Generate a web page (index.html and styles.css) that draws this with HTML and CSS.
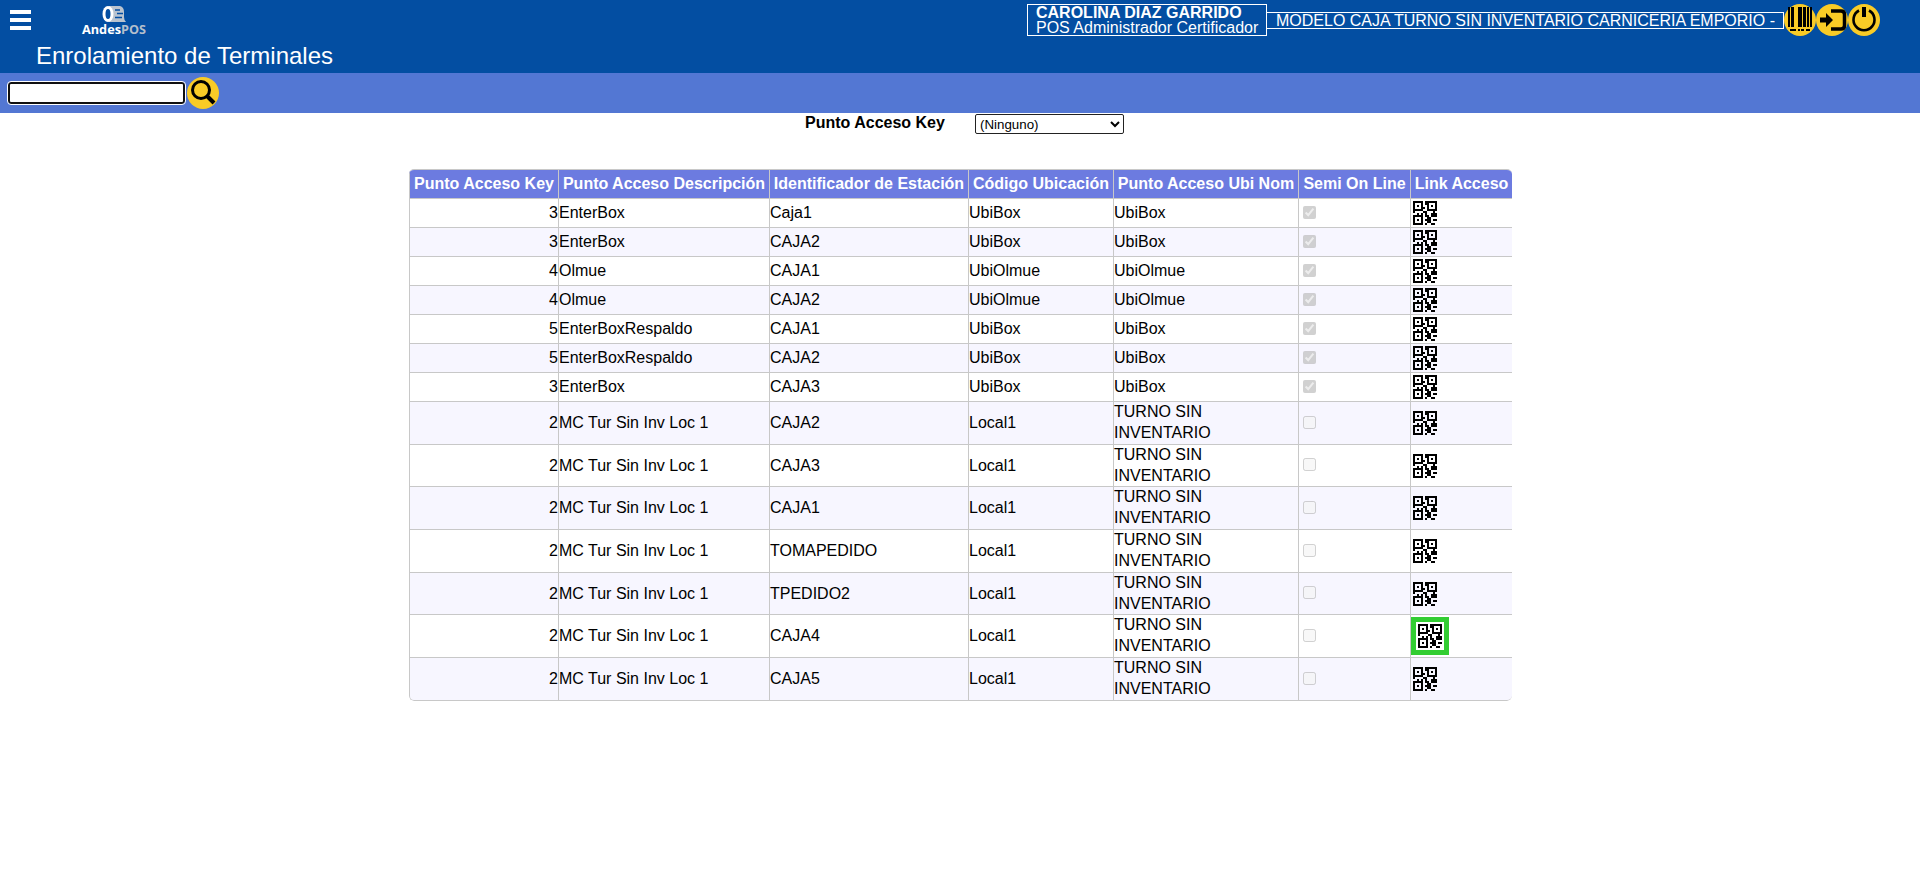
FILE: index.html
```html
<!DOCTYPE html>
<html lang="es">
<head>
<meta charset="utf-8">
<title>Enrolamiento de Terminales</title>
<link rel="stylesheet" href="styles.css">
</head>
<body>
<svg width="0" height="0" class="defs" aria-hidden="true">
  <symbol id="qr" viewBox="0 0 12 12">
    <path fill="none" stroke="#000" stroke-width="1" shape-rendering="crispEdges" d="M0 .5h5M6 .5h6M0 1.500h1M4 1.500h1M6 1.500h2M11 1.500h1M0 2.500h1M2 2.500h1M4 2.500h1M7 2.500h1M9 2.500h1M11 2.500h1M0 3.500h1M4 3.500h2M7 3.500h1M11 3.500h1M0 4.500h5M7 4.500h5M0 5.500h1M5 5.500h2M10 5.500h1M2 6.500h1M4 6.500h1M6 6.500h1M9 6.500h3M0 7.500h5M6 7.500h2M9 7.500h3M0 8.500h1M4 8.500h1M7 8.500h2M0 9.500h1M2 9.500h1M4 9.500h1M6 9.500h3M10 9.500h2M0 10.500h1M4 10.500h1M7 10.500h2M0 11.500h5M6 11.500h1M9 11.500h2"/>
  </symbol>
</svg>
<header class="top">
  <div class="brand">
    <div class="menu"><i></i><i></i><i></i></div>
    <svg class="logo" width="70" height="36" viewBox="0 0 70 36">
      <path fill="#b9c3cf" d="M28 2h11q4 1 4 6v5q0 3 2 5H28z"/>
      <ellipse cx="27" cy="10" rx="5.500" ry="8" fill="#fff"/>
      <ellipse cx="27" cy="10" rx="2.500" ry="5" fill="#034ea2"/>
      <path stroke="#034ea2" stroke-width="1.300" d="M34 6h5M36 9.500h6M34 13.500h7"/>
      <text class="andes" x="1" y="30" textLength="39" lengthAdjust="spacingAndGlyphs">Andes</text>
      <text class="pos" x="40" y="30" textLength="25" lengthAdjust="spacingAndGlyphs">POS</text>
    </svg>
    <h1>Enrolamiento de Terminales</h1>
  </div>
  <div class="session">
    <div class="user"><b>CAROLINA DIAZ GARRIDO</b><span>POS Administrador Certificador</span></div>
    <div class="company"><span>MODELO CAJA TURNO SIN INVENTARIO CARNICERIA EMPORIO -</span></div>
    <svg class="round" viewBox="0 0 32 32"><circle cx="16" cy="16" r="16" fill="#f9cb26"/><path shape-rendering="crispEdges" d="M4 3h2v20H4zM7 3h3v20H7zM14 3h4v20h-4zM19 3h3v20h-3zM23 3h2v20h-2zM26 3h2v20h-2zM6 25h6v2H6zM14 25h2v2h-2zM17 25h3v2h-3zM22 25h4v2h-4z"/></svg>
    <svg class="round" viewBox="0 0 32 32"><circle cx="16" cy="16" r="16" fill="#f9cb26"/><path d="M4 13.500h6V9l7 7-7 7V18.500H4z"/><path d="M15 7h10q3.500 0 3.500 3.500v11q0 3.500-3.500 3.500H15" fill="none" stroke="#000" stroke-width="3.500"/></svg>
    <svg class="round" viewBox="0 0 32 32"><circle cx="16" cy="16" r="16" fill="#f9cb26"/><path d="M11 6.500A10.500 10.500 0 1 0 21 6.500" fill="none" stroke="#000" stroke-width="2.600"/><path d="M14 3h4v10h-4z"/></svg>
  </div>
</header>
<div class="searchbar">
  <input type="text" class="search" aria-label="Buscar">
  <svg class="round" viewBox="0 0 32 32"><circle cx="16" cy="16" r="16" fill="#f9cb26"/><circle cx="14" cy="13" r="8.500" fill="none" stroke="#000" stroke-width="3"/><path d="M20 19l7 7" stroke="#000" stroke-width="4"/></svg>
</div>
<div class="filter">
  <label for="pk"><span>Punto Acceso Key</span></label>
  <select id="pk"><option>(Ninguno)</option></select>
</div>
<table class="grid">
  <colgroup><col class="c1"><col class="c2"><col class="c3"><col class="c4"><col class="c5"><col class="c6"><col class="c7"></colgroup>
  <thead><tr><th>Punto Acceso Key</th><th>Punto Acceso Descripción</th><th>Identificador de Estación</th><th>Código Ubicación</th><th>Punto Acceso Ubi Nom</th><th>Semi On Line</th><th>Link Acceso</th></tr></thead>
  <tbody>
    <tr><td>3</td><td>EnterBox</td><td>Caja1</td><td>UbiBox</td><td>UbiBox</td><td><input type="checkbox" checked disabled></td><td><svg class="qr"><use href="#qr"/></svg></td></tr>
    <tr><td>3</td><td>EnterBox</td><td>CAJA2</td><td>UbiBox</td><td>UbiBox</td><td><input type="checkbox" checked disabled></td><td><svg class="qr"><use href="#qr"/></svg></td></tr>
    <tr><td>4</td><td>Olmue</td><td>CAJA1</td><td>UbiOlmue</td><td>UbiOlmue</td><td><input type="checkbox" checked disabled></td><td><svg class="qr"><use href="#qr"/></svg></td></tr>
    <tr><td>4</td><td>Olmue</td><td>CAJA2</td><td>UbiOlmue</td><td>UbiOlmue</td><td><input type="checkbox" checked disabled></td><td><svg class="qr"><use href="#qr"/></svg></td></tr>
    <tr><td>5</td><td>EnterBoxRespaldo</td><td>CAJA1</td><td>UbiBox</td><td>UbiBox</td><td><input type="checkbox" checked disabled></td><td><svg class="qr"><use href="#qr"/></svg></td></tr>
    <tr><td>5</td><td>EnterBoxRespaldo</td><td>CAJA2</td><td>UbiBox</td><td>UbiBox</td><td><input type="checkbox" checked disabled></td><td><svg class="qr"><use href="#qr"/></svg></td></tr>
    <tr><td>3</td><td>EnterBox</td><td>CAJA3</td><td>UbiBox</td><td>UbiBox</td><td><input type="checkbox" checked disabled></td><td><svg class="qr"><use href="#qr"/></svg></td></tr>
    <tr class="tall"><td>2</td><td>MC Tur Sin Inv Loc 1</td><td>CAJA2</td><td>Local1</td><td>TURNO SIN<br>INVENTARIO</td><td><input type="checkbox" disabled></td><td><svg class="qr"><use href="#qr"/></svg></td></tr>
    <tr class="tall short"><td>2</td><td>MC Tur Sin Inv Loc 1</td><td>CAJA3</td><td>Local1</td><td>TURNO SIN<br>INVENTARIO</td><td><input type="checkbox" disabled></td><td><svg class="qr"><use href="#qr"/></svg></td></tr>
    <tr class="tall"><td>2</td><td>MC Tur Sin Inv Loc 1</td><td>CAJA1</td><td>Local1</td><td>TURNO SIN<br>INVENTARIO</td><td><input type="checkbox" disabled></td><td><svg class="qr"><use href="#qr"/></svg></td></tr>
    <tr class="tall"><td>2</td><td>MC Tur Sin Inv Loc 1</td><td>TOMAPEDIDO</td><td>Local1</td><td>TURNO SIN<br>INVENTARIO</td><td><input type="checkbox" disabled></td><td><svg class="qr"><use href="#qr"/></svg></td></tr>
    <tr class="tall short"><td>2</td><td>MC Tur Sin Inv Loc 1</td><td>TPEDIDO2</td><td>Local1</td><td>TURNO SIN<br>INVENTARIO</td><td><input type="checkbox" disabled></td><td><svg class="qr"><use href="#qr"/></svg></td></tr>
    <tr class="tall"><td>2</td><td>MC Tur Sin Inv Loc 1</td><td>CAJA4</td><td>Local1</td><td>TURNO SIN<br>INVENTARIO</td><td><input type="checkbox" disabled></td><td><svg class="qr marked"><use href="#qr"/></svg></td></tr>
    <tr class="tall"><td>2</td><td>MC Tur Sin Inv Loc 1</td><td>CAJA5</td><td>Local1</td><td>TURNO SIN<br>INVENTARIO</td><td><input type="checkbox" disabled></td><td><svg class="qr"><use href="#qr"/></svg></td></tr>
  </tbody>
</table>
</body>
</html>
```
FILE: styles.css
```css
* { box-sizing: border-box; }
body { margin: 0; background: #fff; color: #000; font: 16px/20.8px "Liberation Sans", Arial, sans-serif; }
.defs { display: none; }
.top { height: 73px; background: #034ea2; color: #fff; display: flex; justify-content: space-between; padding-right: 40px; }
.brand { display: grid; grid-template-columns: 81px 300px; grid-template-rows: 36px 37px; }
.menu { display: flex; flex-direction: column; gap: 4px; padding: 10px 0 0 10px; }
.menu i { width: 21px; height: 4px; background: #fff; }
.logo { display: block; margin-top: 4px; overflow: visible; }
.logo text { font: bold 13px/16px "Open Sans", sans-serif; }
.andes { fill: #fff; }
.pos { fill: #b4bfcc; }
.brand h1 { grid-column: 1 / 3; margin: 0; padding-left: 36px; font-size: 24px; font-weight: normal; line-height: 40px; white-space: nowrap; }
.session { display: flex; align-items: flex-start; padding-top: 4px; }
.user { width: 240px; height: 32px; border: 1px solid #fff; padding: 0 8px; font-size: 16px; line-height: 15px; white-space: nowrap; }
.user b, .user span { display: block; }
.company { width: 518px; height: 17px; margin: 8px 0 0 -1px; border: 1px solid #fff; padding-left: 9px; line-height: 15px; white-space: nowrap; }
.round { display: block; width: 32px; height: 32px; flex: none; }
.searchbar { height: 40px; background: #5377d3; display: flex; align-items: flex-start; gap: 2px; padding: 4px 0 0 8px; }
.search { width: 177px; height: 22px; margin-top: 5px; padding: 0; background: #fff; border: 2px solid #101010; border-radius: 3px; outline: 1px solid #fff; }
.filter { height: 56px; display: flex; align-items: flex-start; padding-left: 805px; }
.filter label { width: 170px; font-weight: bold; line-height: 20px; }
.filter select { width: 149px; height: 20px; margin-top: 1px; padding: 0; border: 1.500px solid #222; border-radius: 2px; background: #fff; color: #000; font: 13.333px "Liberation Sans", Arial, sans-serif; }
.grid { width: 1103px; margin-left: 409px; table-layout: fixed; border-collapse: separate; border-spacing: 0; border: 0 solid #c8c8c8; border-width: 1px 0 0; border-radius: 5px; overflow: hidden; }
.c1 { width: 149px; }
.c2 { width: 211px; }
.c3 { width: 199px; }
.c4 { width: 145px; }
.c5 { width: 185px; }
.c6 { width: 112px; }
.c7 { width: 102px; }
.grid th, .grid td { height: 29px; border: 0 solid #c8c8c8; border-width: 0 0 1px 1px; padding: 1px 0 0; vertical-align: middle; text-align: left; white-space: nowrap; }
.grid th { background: #6c7be0; color: #fff; text-align: center; padding: 0; }
.grid td:first-child { text-align: right; padding-right: 0; }
.grid tbody tr:nth-child(even) { background: #f7f6ff; }
.grid .tall td { height: 43px; padding-top: 0; line-height: 20.8px; }
.grid .short td { height: 42px; line-height: 20.500px; }
.grid .short td:nth-child(-n+4) { padding-top: 1px; }
.grid td:last-child { padding: 0 0 0 2px; }
.grid tr:last-child td:first-child { border-bottom-left-radius: 5px; }
.grid tr:last-child td:last-child { border-bottom-right-radius: 5px; }
.grid input { display: block; width: 13px; height: 13px; margin: -2px 0 0 4px; }
.qr { display: block; width: 24px; height: 24px; }
.marked { width: 38px; height: 38px; margin-left: -2px; padding: 2px; border: 5px solid #32cd32; }
```
